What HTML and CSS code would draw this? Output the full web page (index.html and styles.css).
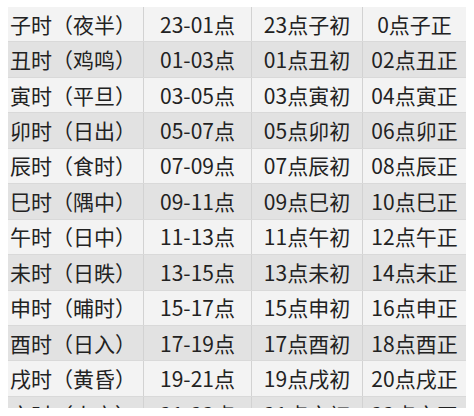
FILE: index.html
```html
<!DOCTYPE html>
<html lang="zh">
<head>
<meta charset="utf-8">
<link rel="stylesheet" href="styles.css">
</head>
<body>
<div class="frame">
  <div class="table">
    <div class="row odd"><div class="c c1">子时（夜半）</div><div class="c">23-01点</div><div class="c">23点子初</div><div class="c">0点子正</div></div>
    <div class="row even"><div class="c c1">丑时（鸡鸣）</div><div class="c">01-03点</div><div class="c">01点丑初</div><div class="c">02点丑正</div></div>
    <div class="row odd"><div class="c c1">寅时（平旦）</div><div class="c">03-05点</div><div class="c">03点寅初</div><div class="c">04点寅正</div></div>
    <div class="row even"><div class="c c1">卯时（日出）</div><div class="c">05-07点</div><div class="c">05点卯初</div><div class="c">06点卯正</div></div>
    <div class="row odd"><div class="c c1">辰时（食时）</div><div class="c">07-09点</div><div class="c">07点辰初</div><div class="c">08点辰正</div></div>
    <div class="row even"><div class="c c1">巳时（隅中）</div><div class="c">09-11点</div><div class="c">09点巳初</div><div class="c">10点巳正</div></div>
    <div class="row odd"><div class="c c1">午时（日中）</div><div class="c">11-13点</div><div class="c">11点午初</div><div class="c">12点午正</div></div>
    <div class="row even"><div class="c c1">未时（日昳）</div><div class="c">13-15点</div><div class="c">13点未初</div><div class="c">14点未正</div></div>
    <div class="row odd"><div class="c c1">申时（晡时）</div><div class="c">15-17点</div><div class="c">15点申初</div><div class="c">16点申正</div></div>
    <div class="row even"><div class="c c1">酉时（日入）</div><div class="c">17-19点</div><div class="c">17点酉初</div><div class="c">18点酉正</div></div>
    <div class="row odd"><div class="c c1">戌时（黄昏）</div><div class="c">19-21点</div><div class="c">19点戌初</div><div class="c">20点戌正</div></div>
    <div class="row even"><div class="c c1">亥时（人定）</div><div class="c">21-23点</div><div class="c">21点亥初</div><div class="c">22点亥正</div></div>
  </div>
</div>
</body>
</html>
```
FILE: styles.css
```css
html, body {
  margin: 0;
  padding: 0;
  background: #ffffff;
}
.frame {
  padding: 7px 8px 0 8px;
}
.table {
  width: 458px;
  height: 401px;
  overflow: hidden;
  font-family: "Noto Sans CJK SC", "Noto Sans", sans-serif;
  font-size: 21px;
  color: #222222;
}
.row {
  display: grid;
  grid-template-columns: 136px 108px 111px 103px;
  height: 35.45px;
  box-sizing: border-box;
  border-bottom: 1px solid #d9d9d9;
}
.row.odd { background: #f3f3f3; }
.row.even { background: #e2e2e2; }
.c {
  display: flex;
  align-items: center;
  justify-content: center;
  border-right: 1px solid #d2d2d2;
  white-space: nowrap;
  line-height: 1;
}
.c:last-child { border-right: none; }
.c1 {
  justify-content: flex-start;
  padding-left: 2px;
}
```
